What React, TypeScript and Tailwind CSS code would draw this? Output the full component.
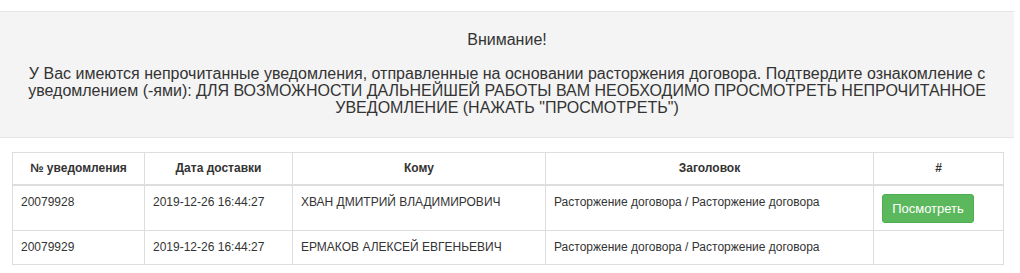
const rows = [
  {
    id: "20079928",
    date: "2019-12-26 16:44:27",
    to: "ХВАН ДМИТРИЙ ВЛАДИМИРОВИЧ",
    title: "Расторжение договора / Расторжение договора",
    unread: true,
  },
  {
    id: "20079929",
    date: "2019-12-26 16:44:27",
    to: "ЕРМАКОВ АЛЕКСЕЙ ЕВГЕНЬЕВИЧ",
    title: "Расторжение договора / Расторжение договора",
    unread: false,
  },
];

export default function App() {
  return (
    <div className="w-[1020px] h-[273px] bg-white pt-[11px] text-[#333] font-['Liberation_Sans',Arial,sans-serif]">
      <div className="w-[1014px] h-[127px] bg-[#f4f4f4] border-t border-b border-[#e6e6e6] px-[12px] pt-[18px] text-center">
        <p className="text-[16px] leading-[20px]">Внимание!</p>
        <p className="mt-[15px] text-[16px] leading-[17px]">
          У Вас имеются непрочитанные уведомления, отправленные на основании расторжения договора. Подтвердите
          ознакомление с уведомлением (-ями): ДЛЯ ВОЗМОЖНОСТИ ДАЛЬНЕЙШЕЙ РАБОТЫ ВАМ НЕОБХОДИМО ПРОСМОТРЕТЬ
          НЕПРОЧИТАННОЕ УВЕДОМЛЕНИЕ (НАЖАТЬ "ПРОСМОТРЕТЬ")
        </p>
      </div>

      <table className="mt-[14px] ml-[12px] w-[991px] border-collapse border border-[#ddd] text-[12px] leading-[17px] table-fixed">
        <colgroup>
          <col className="w-[132px]" />
          <col className="w-[148px]" />
          <col className="w-[253px]" />
          <col className="w-[328px]" />
          <col className="w-[130px]" />
        </colgroup>
        <thead>
          <tr>
            {["№ уведомления", "Дата доставки", "Кому", "Заголовок", "#"].map((h) => (
              <th key={h} className="border border-[#ddd] border-b-2 px-2 py-[7px] font-bold text-center">
                {h}
              </th>
            ))}
          </tr>
        </thead>
        <tbody>
          {rows.map((r) => (
            <tr key={r.id}>
              <td className="border border-[#ddd] p-2 align-top">{r.id}</td>
              <td className="border border-[#ddd] p-2 align-top">{r.date}</td>
              <td className="border border-[#ddd] p-2 align-top">{r.to}</td>
              <td className="border border-[#ddd] p-2 align-top">{r.title}</td>
              <td className="border border-[#ddd] px-2 py-[7px] align-top">
                {r.unread && (
                  <button className="block mt-px w-[92px] h-[29px] rounded-[3px] bg-[#5cb85c] border border-[#4cae4c] text-white text-[13px]">
                    Посмотреть
                  </button>
                )}
              </td>
            </tr>
          ))}
        </tbody>
      </table>
    </div>
  );
}
